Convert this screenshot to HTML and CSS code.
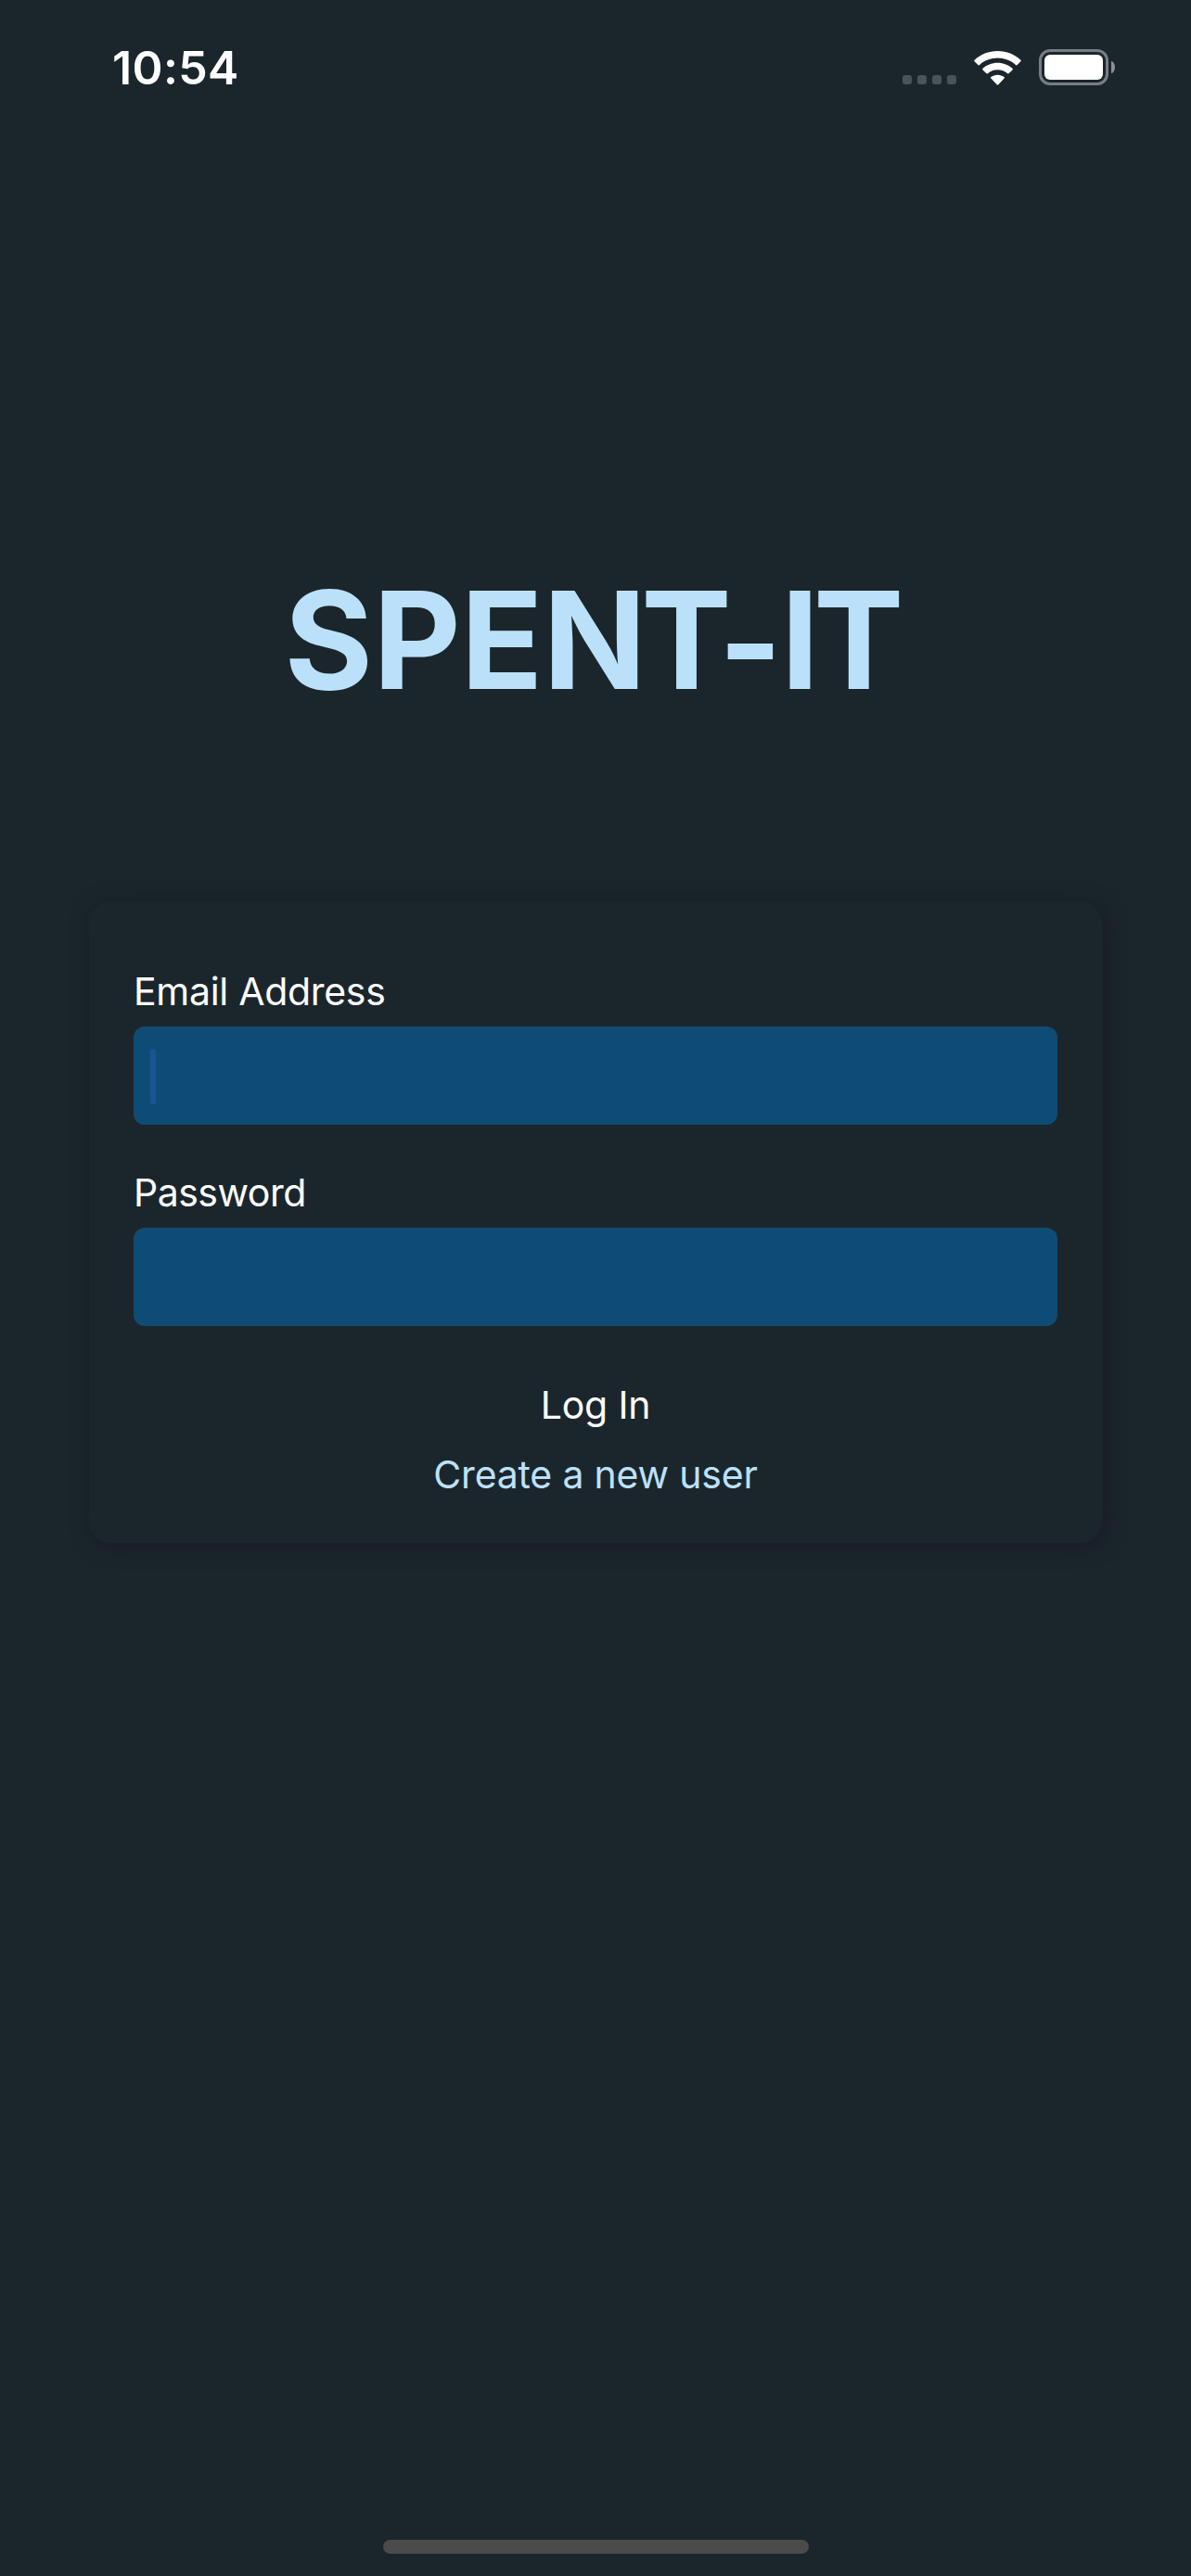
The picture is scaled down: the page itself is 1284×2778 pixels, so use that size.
FILE: index.html
```html
<!DOCTYPE html>
<html lang="en">
<head>
<meta charset="utf-8">
<title>SPENT-IT</title>
<link rel="stylesheet" href="styles.css">
</head>
<body>
<div class="screen">
  <header class="status">
    <span class="time">10:54</span>
    <div class="indicators">
      <div class="cell"><i></i><i></i><i></i><i></i></div>
      <svg class="wifi" viewBox="0 0 51 38" width="51" height="38" fill="#fff">
        <path d="M25.500 1C35.300 1 44 4.700 50.400 10.700Q51.200 11.500 50.400 12.300L46.600 16Q45.800 16.800 45 16C39.900 11.300 33 8.500 25.500 8.500S11.100 11.300 6 16Q5.200 16.800 4.400 16L.6 12.300Q-.2 11.500 .6 10.700C7 4.700 15.700 1 25.500 1Z"/>
        <path d="M25.500 13.700C31.800 13.700 37.300 16 41.500 19.800Q42.300 20.600 41.500 21.400L37.700 25.100Q36.900 25.900 36.100 25.200C33.300 22.700 29.600 21.200 25.500 21.200S17.700 22.700 14.900 25.200Q14.100 25.900 13.300 25.100L9.500 21.400Q8.700 20.600 9.500 19.800C13.700 16 19.200 13.700 25.500 13.700Z"/>
        <path d="M25.500 26.700C28.300 26.700 30.700 27.600 32.600 29.100Q33.300 29.800 32.600 30.500L26.300 37.300Q25.500 38.100 24.700 37.300L18.400 30.500Q17.700 29.800 18.400 29.100C20.300 27.600 22.700 26.700 25.500 26.700Z"/>
      </svg>
      <div class="battery"><div class="shell"><div class="charge"></div></div><div class="nub"></div></div>
    </div>
  </header>
  <main class="login">
    <h1 class="brand">SPE<span class="kern-n">N</span><span class="kern-t">T</span><span class="dash">-</span><span class="kern-i">I</span>T</h1>
    <form class="card">
      <label class="label" for="email">Email Address</label>
      <div class="field" id="email"><span class="caret"></span></div>
      <label class="label label-next" for="password">Password</label>
      <div class="field" id="password"></div>
      <div class="action submit"><span>Log In</span></div>
      <div class="action create"><span>Create a new user</span></div>
    </form>
  </main>
  <div class="home"></div>
</div>
</body>
</html>
```
FILE: styles.css
```css
* { box-sizing: border-box; }
body {
  margin: 0;
  background: #1b262c;
  color: #fff;
  font-family: Inter, "Liberation Sans", sans-serif;
}
.screen {
  display: flex;
  flex-direction: column;
  width: 1284px;
  height: 2778px;
  overflow: hidden;
}
.status {
  display: flex;
  justify-content: space-between;
  align-items: flex-start;
  height: 141px;
  padding: 43px 82px 0 121px;
}
.time {
  font-size: 50px;
  line-height: 60px;
  font-weight: 600;
  letter-spacing: .4px;
}
.indicators {
  display: flex;
  align-items: flex-end;
  height: 49px;
}
.cell { display: flex; gap: 6px; margin: 0 19px 1px 0; }
.cell i { width: 10px; height: 10px; border-radius: 3px; background: #4c525a; }
.wifi { margin-right: 19px; }
.battery { display: flex; align-items: center; gap: 3px; }
.shell {
  width: 75px;
  height: 39px;
  padding: 3px;
  border: 3px solid #777d83;
  border-radius: 12px;
}
.charge { height: 27px; border-radius: 6px; background: #fff; }
.nub { width: 4px; height: 13px; border-radius: 0 4px 4px 0 / 0 6.500px 6.500px 0; background: #8b9094; }
.login { padding: 459px 96px 0; flex: 1; }
.brand {
  height: 180px;
  margin: 0 0 192px;
  font-size: 146px;
  line-height: 180px;
  font-weight: 700;
  color: #bbe1fa;
  text-align: center;
  text-indent: -3px;
  white-space: nowrap;
}
.kern-n { letter-spacing: -5.500px; }
.kern-t { letter-spacing: -14px; }
.dash { letter-spacing: -1px; line-height: 0; vertical-align: -3px; }
.kern-i { letter-spacing: -6px; }
.card {
  display: flex;
  flex-direction: column;
  height: 692px;
  padding: 72px 48px 49px;
  border-radius: 24px;
  background: #1b262c;
  box-shadow: 3px 3px 22px rgba(24, 16, 30, .5);
  font-size: 41px;
  line-height: 50px;
  letter-spacing: -.2px;
}
.label { margin-bottom: 13px; letter-spacing: -.3px; }
.label-next { margin-top: 48px; letter-spacing: -.5px; }
.field {
  display: flex;
  align-items: flex-start;
  height: 106px;
  padding: 24px 18px;
  border-radius: 12px;
  background: #0f4c75;
}
.caret { width: 6px; height: 60px; border-radius: 3px; background: #1b5394; }
.action { text-align: center; }
.submit { margin-top: 60px; }
.create { margin-top: 25px; color: #bbe1fa; }
.home {
  align-self: center;
  width: 459px;
  height: 15px;
  margin-bottom: 24px;
  border-radius: 8px;
  background: #4b4b4b;
}
```
